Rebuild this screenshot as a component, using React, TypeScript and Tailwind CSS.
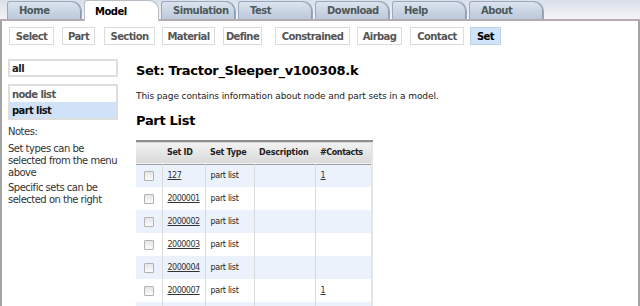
import React from 'react';

const tabs = ['Home', 'Model', 'Simulation', 'Test', 'Download', 'Help', 'About'];

// widths and gaps read off the screenshot
const subTabs = [
  { label: 'Select', cls: 'w-[45px] ml-[7px]' },
  { label: 'Part', cls: 'w-[33px] ml-[8px]' },
  { label: 'Section', cls: 'w-[51px] ml-[9px]' },
  { label: 'Material', cls: 'w-[53px] ml-[7px]' },
  { label: 'Define', cls: 'w-[39px] ml-[8px]' },
  { label: 'Constrained', cls: 'w-[75px] ml-[13px]' },
  { label: 'Airbag', cls: 'w-[45px] ml-[7px]' },
  { label: 'Contact', cls: 'w-[54px] ml-[8px]' },
  { label: 'Set', cls: 'w-[31px] ml-[6px]' },
];

const rows = [
  { id: '127', type: 'part list', contacts: '1' },
  { id: '2000001', type: 'part list', contacts: '' },
  { id: '2000002', type: 'part list', contacts: '' },
  { id: '2000003', type: 'part list', contacts: '' },
  { id: '2000004', type: 'part list', contacts: '' },
  { id: '2000007', type: 'part list', contacts: '1' },
];

const TabBar = () => (
  <nav className="flex h-[21px] items-end gap-[2px] border-b-2 border-[#b7abb2] bg-gradient-to-b from-[#d9e0ea] to-[#f5f3f6] pl-[7px]">
    {tabs.map((t) =>
      t === 'Model' ? (
        <div
          key={t}
          className="relative -mb-[2px] flex h-[21px] w-[75px] items-center rounded-tl-[3px] rounded-tr-[10px] border border-b-0 border-[#b9bcc4] bg-white pl-[10px] text-[10px] font-bold tracking-[-0.5px] text-black"
        >
          {t}
        </div>
      ) : (
        <div
          key={t}
          className="flex h-[18px] w-[75px] items-center rounded-tl-[3px] rounded-tr-[10px] border border-b-0 border-[#9aa9bd] bg-gradient-to-b from-[#dbe3ee] to-[#bcc9da] pl-[11px] text-[10px] font-bold tracking-[-0.5px] text-[#4d5a5b] shadow-[inset_-1px_0_0_#8e9db3]"
        >
          {t}
        </div>
      )
    )}
  </nav>
);

const SubNav = () => (
  <div className="flex pt-[6px]">
    {subTabs.map((t) => (
      <div
        key={t.label}
        className={
          t.label === 'Set'
            ? `flex h-[18px] items-center justify-center border border-[#bcd0e6] bg-[#cfe3fa] text-[10px] font-bold tracking-[-0.6px] text-black ${t.cls}`
            : `flex h-[18px] items-center justify-center border border-[#dcdcdc] bg-white text-[10px] font-bold tracking-[-0.6px] text-[#555] ${t.cls}`
        }
      >
        {t.label}
      </div>
    ))}
  </div>
);

const Sidebar = () => (
  <aside className="ml-[6px] w-[110px] shrink-0">
    <div className="flex h-[18px] items-center border-2 border-[#dedede] pl-[2px] text-[10px] font-bold tracking-[-0.5px] text-[#222]">
      all
    </div>
    <div className="mt-[7px] border-2 border-[#dedede]">
      <div className="flex h-[16px] items-center bg-white pl-[2px] text-[10px] font-bold tracking-[-0.6px] text-[#555]">
        node list
      </div>
      <div className="flex h-[16px] items-center bg-[#cfe2f8] pl-[2px] text-[10px] font-bold tracking-[-0.6px] text-[#111]">
        part list
      </div>
    </div>
    <div className="mt-[6px] w-[118px] whitespace-nowrap text-[10px] leading-[12px] tracking-[-0.5px] text-[#333]">
      <p>Notes:</p>
      <p className="mt-[5px]">
        Set types can be
        <br />
        selected from the menu
        <br />
        above
      </p>
      <p className="mt-[3px]">
        Specific sets can be
        <br />
        selected on the right
      </p>
    </div>
  </aside>
);

const Checkbox = () => (
  <div className="mx-auto h-[10px] w-[10px] rounded-[1px] border border-[#b3b3b3] bg-gradient-to-b from-[#e6e6e6] to-[#fafafa]" />
);

const PartTable = () => (
  <table className="mt-[9px] w-[236px] table-fixed border-collapse border-r-2 border-[#e4e4e4] text-[8px] text-[#222]">
    <colgroup>
      <col className="w-[26px]" />
      <col className="w-[43px]" />
      <col className="w-[49px]" />
      <col className="w-[61px]" />
      <col className="w-[57px]" />
    </colgroup>
    <thead>
      <tr className="h-[23px] border-t-2 border-b border-t-[#8f8f8f] border-b-[#a0a0a0] bg-gradient-to-b from-[#f2f2f2] to-[#d9d9d9]">
        <th />
        <th className="pl-[5px] text-left font-bold tracking-[-0.3px]">Set ID</th>
        <th className="pl-[5px] text-left font-bold tracking-[-0.3px]">Set Type</th>
        <th className="pl-[5px] text-left font-bold tracking-[-0.2px]">Description</th>
        <th className="pl-[5px] text-left font-bold tracking-[-0.4px]">#Contacts</th>
      </tr>
    </thead>
    <tbody>
      {rows.map((r, i) => (
        <tr key={r.id} className={i % 2 === 0 ? 'h-[23px] bg-[#ebf2fc]' : 'h-[23px] bg-white'}>
          <td className="border-r border-[#dadada]">
            <Checkbox />
          </td>
          <td className="border-r border-[#dadada] pl-[5px]">
            <span className="tracking-[-0.5px] text-[#333] underline">{r.id}</span>
          </td>
          <td className="border-r border-[#dadada] pl-[5px] tracking-[-0.3px]">{r.type}</td>
          <td className="border-r border-[#dadada]" />
          <td className="pl-[5px]">
            {r.contacts && <span className="text-[#333] underline">{r.contacts}</span>}
          </td>
        </tr>
      ))}
      {/* next row continues below the fold */}
      <tr className="h-[23px] bg-[#ebf2fc]">
        <td className="border-r border-[#dadada]" />
        <td className="border-r border-[#dadada]" />
        <td className="border-r border-[#dadada]" />
        <td className="border-r border-[#dadada]" />
        <td />
      </tr>
    </tbody>
  </table>
);

export default function App() {
  return (
    <div className="h-[306px] w-[640px] overflow-hidden bg-white font-['DejaVu_Sans',sans-serif]">
      <TabBar />
      <div className="flex h-[285px] flex-col border-x-2 border-[#a3a3a3]">
        <SubNav />
        <div className="mt-[14px] flex">
          <Sidebar />
          <main className="ml-[18px] flex-1">
            <h1 className="mt-[2px] text-[13px] font-bold leading-[20px] tracking-[-0.3px] text-black">
              Set: Tractor_Sleeper_v100308.k
            </h1>
            <p className="mt-[9px] text-[9px] leading-[12px] tracking-[-0.1px] text-[#222]">
              This page contains information about node and part sets in a model.
            </p>
            <h2 className="mt-[9px] text-[13px] font-bold leading-[20px] tracking-[-0.3px] text-black">
              Part List
            </h2>
            <PartTable />
          </main>
        </div>
      </div>
    </div>
  );
}
